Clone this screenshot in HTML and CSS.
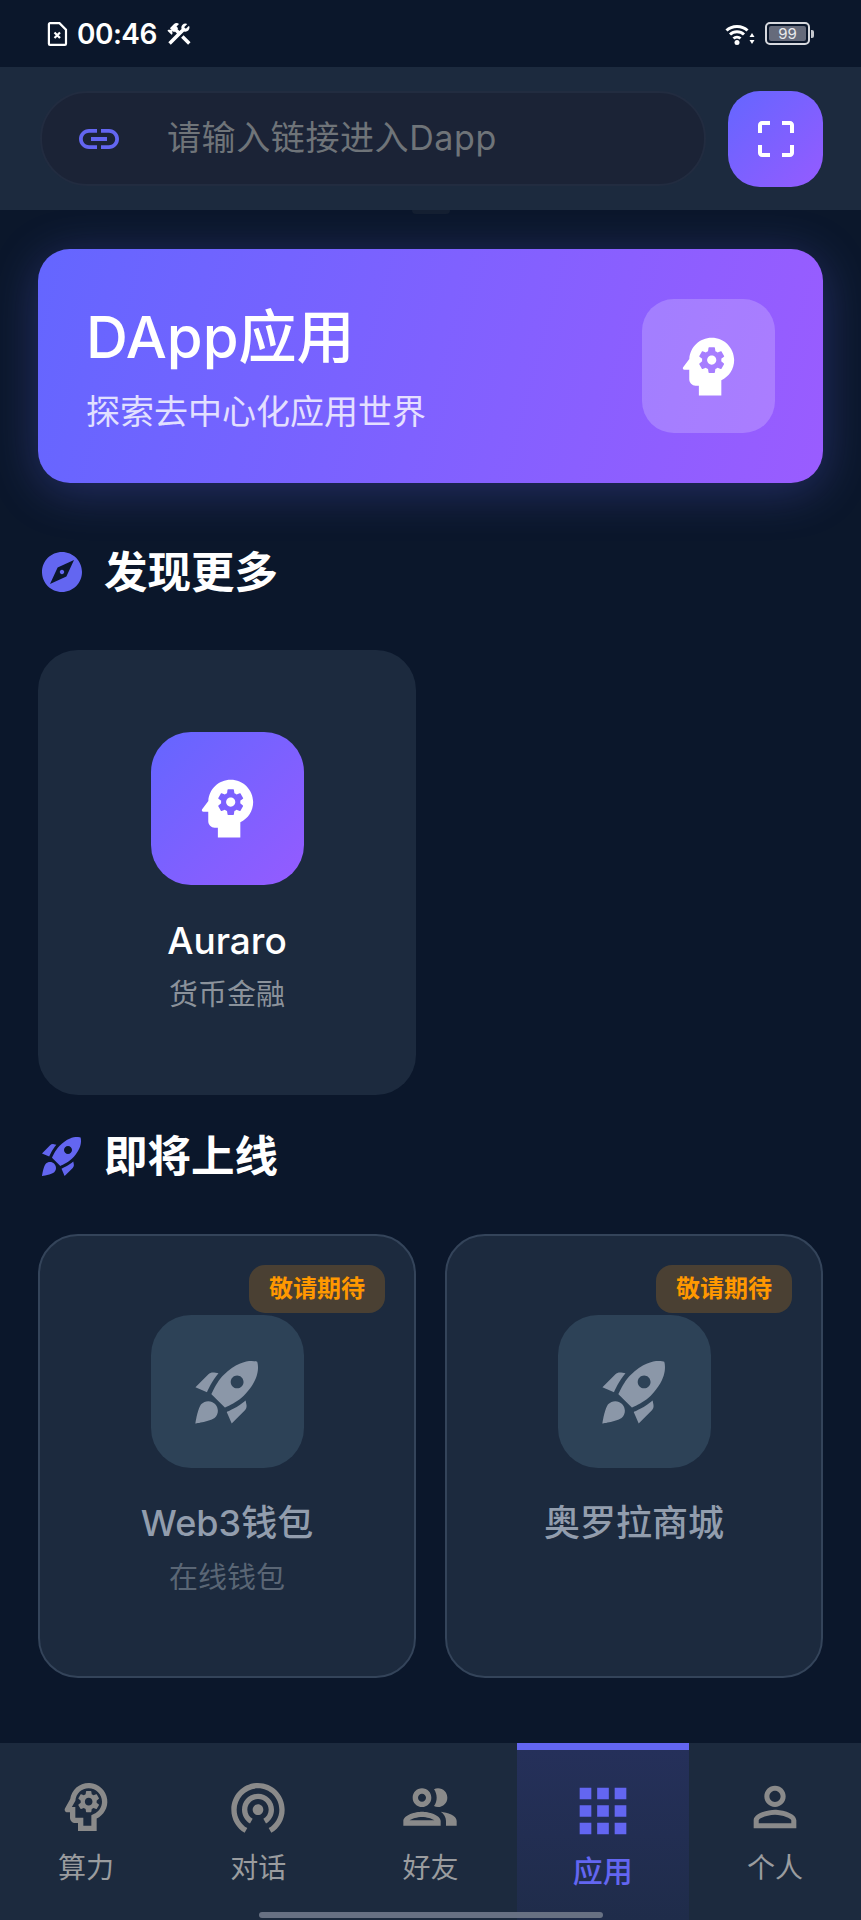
FILE: index.html
```html
<!DOCTYPE html>
<html lang="zh-CN">

<head>
   <meta charset="utf-8">
   <title>DApp应用</title>
   <link rel="stylesheet" href="styles.css">
</head>

<body>
   <svg class="defs" width="0" height="0" aria-hidden="true">
      <symbol id="i-head" viewBox="0 0 24 24">
         <path d="M13 8.57c-.79 0-1.43.64-1.43 1.43s.64 1.43 1.43 1.43 1.43-.64 1.43-1.43-.64-1.43-1.43-1.43z" />
         <path d="M13 3C9.25 3 6.2 5.94 6.02 9.64L4.1 12.2c-.25.33-.01.8.4.8H6v3c0 1.1.9 2 2 2h1v3h7v-4.68c2.36-1.12 4-3.53 4-6.32 0-3.87-3.13-7-7-7zm3 7c0 .13-.01.26-.03.38l.83.66c.07.06.09.16.04.25l-.8 1.39c-.05.09-.15.12-.24.09l-.99-.4c-.21.16-.43.29-.67.39L14 13.83c-.01.1-.1.17-.2.17h-1.6c-.1 0-.18-.07-.2-.17l-.15-1.06c-.25-.1-.47-.23-.68-.39l-.99.4c-.09.03-.2 0-.25-.09l-.8-1.39c-.05-.08-.03-.19.05-.25l.84-.66c-.01-.13-.02-.26-.02-.39s.02-.27.04-.39l-.85-.66c-.08-.06-.1-.16-.05-.26l.8-1.38c.05-.09.15-.12.24-.09l1 .4c.2-.15.43-.29.67-.39L12 6.17c.02-.1.1-.17.2-.17h1.6c.1 0 .18.07.2.17l.15 1.06c.24.1.46.23.67.39l1-.4c.09-.03.2 0 .24.09l.8 1.38c.05.09.03.2-.04.26l-.85.66c.03.12.04.25.04.39z" fill-rule="evenodd" />
      </symbol>
      <symbol id="i-head-line" viewBox="0 0 24 24">
         <path d="M15.82 7.22l-1 .4c-.21-.16-.43-.29-.67-.39L14 6.17c-.02-.1-.1-.17-.2-.17h-1.6c-.1 0-.18.07-.19.17l-.15 1.06c-.24.1-.47.23-.67.39l-1-.4c-.09-.03-.2 0-.24.09l-.8 1.38c-.05.09-.03.2.05.26l.84.66c-.02.13-.04.26-.04.39 0 .13.01.26.03.39l-.84.66c-.07.06-.09.17-.05.25l.8 1.38c.05.09.15.12.25.09l.99-.4c.21.16.43.29.68.39l.14 1.06c.02.1.1.17.2.17h1.6c.1 0 .18-.07.2-.17l.15-1.06c.24-.1.47-.23.67-.39l.99.4c.09.04.2 0 .24-.09l.8-1.38c.05-.09.03-.19-.05-.25l-.83-.66c.02-.13.03-.26.03-.39 0-.14-.01-.27-.03-.39l.84-.66c.07-.06.09-.17.05-.26l-.8-1.38c-.05-.09-.16-.12-.25-.09zM13 11.43c-.79 0-1.43-.64-1.43-1.43s.64-1.43 1.43-1.43 1.43.64 1.43 1.43-.64 1.43-1.43 1.43z" fill-rule="evenodd" />
         <path d="M19.94 9.06c-.43-3.27-3.23-5.86-6.53-6.05C13.27 3 13.14 3 13 3 9.47 3 6.57 5.61 6.08 9l-1.93 3.48c-.41.66.07 1.52.85 1.52h1v2c0 1.1.9 2 2 2h1v3h7v-4.68c2.62-1.25 4.35-4.08 3.94-7.26zm-5.05 5.57l-.89.42V19h-3v-3H8v-4H6.7l1.33-2.33C8.21 7.06 10.35 5 13 5c2.76 0 5 2.24 5 5 0 2.09-1.29 3.88-3.11 4.63z" fill-rule="evenodd" />
      </symbol>
      <symbol id="i-rocket" viewBox="0 0 24 24">
         <path d="M9.19 6.35c-2.04 2.29-3.44 5.58-3.57 5.89L2 10.69l4.05-4.05c.47-.47 1.15-.68 1.81-.55l1.33.26zM11.17 17s3.74-1.55 5.89-3.7c5.4-5.4 4.5-9.62 4.21-10.57-.95-.3-5.17-1.19-10.57 4.21C8.55 9.09 7 12.83 7 12.83L11.17 17zm6.48-2.19c-2.29 2.04-5.58 3.44-5.89 3.57L13.31 22l4.05-4.05c.47-.47.68-1.15.55-1.81l-.26-1.33zM9 18c0 .83-.34 1.58-.88 2.12C6.94 21.3 2 22 2 22s.7-4.94 1.88-6.12C4.42 15.34 5.17 15 6 15c1.66 0 3 1.34 3 3zm4-9c0-1.1.9-2 2-2s2 .9 2 2-.9 2-2 2-2-.9-2-2z" fill-rule="evenodd" />
      </symbol>
   </svg>

   <div class="status-bar">
      <div class="status-left">
         <svg class="ic-sim" viewBox="0 0 20 24">
            <path d="M2.5 1.2h9.5l6.5 6.5v14c0 .6-.5 1.1-1.1 1.1H2.5c-.6 0-1.1-.5-1.1-1.1V2.3c0-.6.5-1.1 1.1-1.1z" fill="none" stroke="#fff" stroke-width="2.2" />
            <path d="M7 10.5l5.5 5.5M12.5 10.5L7 16" stroke="#fff" stroke-width="2.2" />
         </svg>
         <span class="clock">00:46</span>
         <svg class="ic-tools" viewBox="0 0 24 24">
            <path d="M13.78 15.3l6 6 2.11-2.16-6-6zM17.5 10c1.93 0 3.5-1.57 3.5-3.5 0-.58-.16-1.12-.41-1.6l-2.7 2.7-1.49-1.49 2.7-2.7c-.48-.25-1.02-.41-1.6-.41C15.57 3 14 4.57 14 6.5c0 .41.08.8.21 1.16l-1.85 1.85-1.78-1.78.71-.71-1.41-1.41L12 3.49c-1.17-1.17-3.07-1.17-4.24 0L4.22 7.03l1.41 1.41H2.81l-.71.71 3.54 3.54.71-.71V9.15l1.41 1.41.71-.71 1.78 1.78-7.41 7.41 2.12 2.12L16.34 9.79c.36.13.75.21 1.16.21z" fill="#fff" />
         </svg>
      </div>
      <div class="status-right">
         <svg class="ic-wifi" viewBox="0 0 30 24">
            <path d="M1.5 8.5C7 3 17 3 22.5 8.5M5 12.5c4-3.8 10-3.8 14 0M8.5 16.5c2-1.8 5-1.8 7 0" fill="none" stroke="#fff" stroke-width="3" />
            <circle cx="12" cy="20.5" r="2.5" fill="#fff" />
            <path d="M27 11l2.5 4h-5zM27 22l-2.5-4h5z" fill="#fff" />
         </svg>
         <div class="battery"><span class="battery-level">99</span></div>
         <span class="battery-nub"></span>
      </div>
   </div>

   <div class="search-bar">
      <div class="search-input">
         <svg class="ic-link" viewBox="0 0 24 24">
            <path d="M3.9 12c0-1.71 1.39-3.1 3.1-3.1h4V7H7c-2.76 0-5 2.24-5 5s2.24 5 5 5h4v-1.9H7c-1.71 0-3.1-1.39-3.1-3.1zM8 13h8v-2H8v2zm9-6h-4v1.9h4c1.71 0 3.1 1.39 3.1 3.1s-1.39 3.1-3.1 3.1h-4V17h4c2.76 0 5-2.24 5-5s-2.24-5-5-5z" />
         </svg>
         <span class="placeholder">请输入链接进入Dapp</span>
      </div>
      <div class="scan-btn">
         <svg class="ic-scan" viewBox="0 0 24 24">
            <path d="M3 5v4h2V5h4V3H5c-1.1 0-2 .9-2 2zm2 10H3v4c0 1.1.9 2 2 2h4v-2H5v-4zm14 4h-4v2h4c1.1 0 2-.9 2-2v-4h-2v4zm0-16h-4v2h4v4h2V5c0-1.1-.9-2-2-2z" />
         </svg>
      </div>
      <span class="search-bump"></span>
   </div>

   <div class="main">
      <div class="hero">
         <div>
            <div class="hero-title">DApp应用</div>
            <div class="hero-sub">探索去中心化应用世界</div>
         </div>
         <div class="hero-icon">
            <svg class="ic-app"><use href="#i-head" /></svg>
         </div>
      </div>

      <div class="section-title first">
         <svg class="ic-section" viewBox="0 0 24 24">
            <path d="M12 10.9c-.61 0-1.1.49-1.1 1.1s.49 1.1 1.1 1.1c.61 0 1.1-.49 1.1-1.1s-.49-1.1-1.1-1.1zM12 2C6.48 2 2 6.48 2 12s4.48 10 10 10 10-4.48 10-10S17.52 2 12 2zm2.19 12.19L6 18l3.81-8.19L18 6l-3.81 8.19z" />
         </svg>
         <span>发现更多</span>
      </div>
      <div class="app-grid">
         <div class="app-card">
            <div class="app-icon live">
               <svg class="ic-app"><use href="#i-head" /></svg>
            </div>
            <div class="app-name">Auraro</div>
            <div class="app-desc">货币金融</div>
         </div>
      </div>

      <div class="section-title">
         <svg class="ic-section"><use href="#i-rocket" /></svg>
         <span>即将上线</span>
      </div>
      <div class="app-grid">
         <div class="app-card soon">
            <span class="badge">敬请期待</span>
            <div class="app-icon">
               <svg class="ic-app"><use href="#i-rocket" /></svg>
            </div>
            <div class="app-name">Web3钱包</div>
            <div class="app-desc">在线钱包</div>
         </div>
         <div class="app-card soon">
            <span class="badge">敬请期待</span>
            <div class="app-icon">
               <svg class="ic-app"><use href="#i-rocket" /></svg>
            </div>
            <div class="app-name">奥罗拉商城</div>
         </div>
      </div>
   </div>

   <div class="tabbar">
      <div class="tab">
         <svg class="ic-tab"><use href="#i-head-line" /></svg>
         <span>算力</span>
      </div>
      <div class="tab">
         <svg class="ic-tab" viewBox="0 0 24 24">
            <path d="M12 11c-1.1 0-2 .9-2 2 0 .55.23 1.05.59 1.41.36.36.86.59 1.41.59s1.05-.23 1.41-.59c.36-.36.59-.86.59-1.41 0-1.1-.9-2-2-2zm6 2c0-3.31-2.69-6-6-6s-6 2.69-6 6c0 2.22 1.21 4.15 3 5.19l1-1.74c-1.19-.7-2-1.97-2-3.45 0-2.21 1.79-4 4-4s4 1.79 4 4c0 1.48-.81 2.75-2 3.45l1 1.74c1.79-1.04 3-2.97 3-5.19zM12 3C6.48 3 2 7.48 2 13c0 3.7 2.01 6.92 4.99 8.65l1-1.73C5.61 18.53 4 15.96 4 13c0-4.42 3.58-8 8-8s8 3.58 8 8c0 2.96-1.61 5.53-4 6.92l1 1.73c2.99-1.73 5-4.95 5-8.65 0-5.52-4.48-10-10-10z" />
         </svg>
         <span>对话</span>
      </div>
      <div class="tab">
         <svg class="ic-tab" viewBox="0 0 24 24">
            <path d="M9 13.75c-2.34 0-7 1.17-7 3.5V19h14v-1.75c0-2.33-4.66-3.5-7-3.5zM4.34 17c.84-.58 2.87-1.25 4.66-1.25s3.82.67 4.66 1.25H4.34zM9 12c1.93 0 3.5-1.57 3.5-3.5S10.93 5 9 5 5.5 6.57 5.5 8.5 7.07 12 9 12zm0-5c.83 0 1.5.67 1.5 1.5S9.83 10 9 10s-1.5-.67-1.5-1.5S8.17 7 9 7zm7.04 6.81c1.16.84 1.96 1.96 1.96 3.44V19h4v-1.75c0-2.02-3.5-3.17-5.96-3.44zM15 12c1.93 0 3.5-1.57 3.5-3.5S16.93 5 15 5c-.54 0-1.04.13-1.5.35.63.89 1 1.98 1 3.15s-.37 2.26-1 3.15c.46.22.96.35 1.5.35z" />
         </svg>
         <span>好友</span>
      </div>
      <div class="tab active">
         <svg class="ic-tab" viewBox="0 0 24 24">
            <path d="M4 8h4V4H4v4zm6 12h4v-4h-4v4zm-6 0h4v-4H4v4zm0-6h4v-4H4v4zm6 0h4v-4h-4v4zm6-10v4h4V4h-4zm-6 4h4V4h-4v4zm6 6h4v-4h-4v4zm0 6h4v-4h-4v4z" />
         </svg>
         <span>应用</span>
      </div>
      <div class="tab">
         <svg class="ic-tab" viewBox="0 0 24 24">
            <path d="M12 5.9c1.16 0 2.1.94 2.1 2.1s-.94 2.1-2.1 2.1S9.9 9.16 9.9 8s.94-2.1 2.1-2.1m0 9c2.97 0 6.1 1.46 6.1 2.1v1.1H5.9V17c0-.64 3.13-2.1 6.1-2.1M12 4C9.79 4 8 5.79 8 8s1.79 4 4 4 4-1.79 4-4-1.79-4-4-4zm0 9c-2.67 0-8 1.34-8 4v3h16v-3c0-2.66-5.33-4-8-4z" />
         </svg>
         <span>个人</span>
      </div>
      <span class="home-bar"></span>
   </div>
</body>

</html>
```

FILE: styles.css
```css
* {
   box-sizing: border-box;
}

html,
body {
   margin: 0;
   height: 1920px;
}

body {
   display: flex;
   flex-direction: column;
   background: #0b172b;
   color: #fff;
   font-family: Inter, "Noto Sans CJK SC", sans-serif;
   overflow: hidden;
}

svg {
   display: block;
   flex: none;
}

.defs {
   position: absolute;
}

/* status bar */
.status-bar {
   height: 67px;
   flex: none;
   display: flex;
   justify-content: space-between;
   align-items: center;
   padding: 0 47px 0 47px;
}

.status-left,
.status-right {
   display: flex;
   align-items: center;
}

.ic-sim {
   width: 21px;
   height: 24px;
}

.clock {
   margin-left: 9px;
   font-size: 28px;
   font-weight: 600;
   letter-spacing: -.5px;
   line-height: 36px;
}

.ic-tools {
   width: 28px;
   height: 28px;
   margin-left: 8px;
}

.ic-wifi {
   width: 30px;
   height: 24px;
}

.battery {
   width: 45px;
   height: 23px;
   margin-left: 10px;
   padding: 2px;
   border: 2px solid #d7d9de;
   border-radius: 5px;
   display: flex;
}

.battery-level {
   flex: 1;
   background: #666b7b;
   border-radius: 2px;
   font-size: 15px;
   line-height: 15px;
   text-align: center;
   color: #e8e9ec;
}

.battery-nub {
   width: 3px;
   height: 8px;
   margin-left: 1px;
   background: #c5c7cd;
   border-radius: 0 2px 2px 0;
}

/* link input */
.search-bar {
   position: relative;
   height: 143px;
   flex: none;
   display: flex;
   align-items: center;
   gap: 22px;
   padding: 0 38px 0 40px;
   background: #1c2a3e;
}

.search-input {
   flex: 1;
   height: 95px;
   display: flex;
   align-items: center;
   padding-left: 33px;
   background: #1b2336;
   border: 2px solid #222c40;
   border-radius: 48px;
}

.ic-link {
   width: 48px;
   height: 48px;
   fill: #6366f1;
}

.placeholder {
   margin: 0 0 6px 44px;
   font-size: 34px;
   letter-spacing: .6px;
   color: #6f7479;
}

.scan-btn {
   width: 95px;
   height: 96px;
   display: flex;
   align-items: center;
   justify-content: center;
   border-radius: 32px;
   background: linear-gradient(135deg, #6466ff, #955bff);
}

.ic-scan {
   width: 48px;
   height: 48px;
   fill: #fff;
}

.search-bump {
   position: absolute;
   left: 412px;
   bottom: -4px;
   width: 38px;
   height: 4px;
   background: #141f31;
   border-radius: 0 0 19px 19px;
}

/* page content */
.main {
   flex: 1;
   padding: 39px 38px 0;
}

.hero {
   height: 234px;
   display: flex;
   align-items: center;
   justify-content: space-between;
   padding: 3px 48px 0 48px;
   border-radius: 32px;
   background: linear-gradient(105deg, #6466ff, #9a5cff);
   box-shadow: 0 8px 48px rgba(99, 102, 241, .3);
}

.hero-title {
   font-size: 58px;
   font-weight: 500;
   line-height: 72px;
}

.hero-sub {
   margin-top: 17px;
   font-size: 34px;
   line-height: 44px;
   opacity: .8;
}

.hero-icon {
   width: 133px;
   height: 134px;
   margin-top: -3px;
   display: flex;
   align-items: center;
   justify-content: center;
   border-radius: 32px;
   background: rgba(255, 255, 255, .2);
}

.ic-app {
   width: 77px;
   height: 77px;
   fill: #fff;
}

.section-title {
   height: 48px;
   display: flex;
   align-items: center;
   gap: 18px;
   margin-top: 37px;
   font-size: 43.5px;
   font-weight: 700;
}

.section-title span {
   margin-bottom: 6px;
}

.section-title.first {
   margin-top: 65px;
}

.ic-section {
   width: 48px;
   height: 48px;
   fill: #6366f1;
}

.app-grid {
   display: grid;
   grid-template-columns: 378px 378px;
   gap: 29px;
   margin-top: 54px;
}

.app-card {
   position: relative;
   height: 445px;
   display: flex;
   flex-direction: column;
   align-items: center;
   padding-top: 82px;
   border-radius: 40px;
   background: #1c2a3e;
}

.app-card.soon {
   height: 444px;
   padding-top: 79px;
   border: 2px solid #34445a;
}

.app-icon {
   width: 153px;
   height: 153px;
   display: flex;
   align-items: center;
   justify-content: center;
   border-radius: 40px;
   background: #2d4257;
}

.app-icon.live {
   background: linear-gradient(135deg, #6466ff, #955bff);
}

.app-name {
   margin-top: 32px;
   font-size: 37px;
   font-weight: 500;
   line-height: 48px;
}

.app-desc {
   margin-top: 10px;
   font-size: 29px;
   line-height: 40px;
   color: #8b929b;
}

.soon .ic-app {
   fill: #8b97a8;
}

.soon .app-name {
   margin-top: 31px;
   font-size: 36px;
   font-weight: 500;
   color: #929dad;
}

.soon .app-desc {
   margin-top: 11px;
   color: #5a6675;
}

.badge {
   position: absolute;
   top: 29px;
   right: 29px;
   width: 136px;
   height: 48px;
   border-radius: 16px;
   background: #4a4033;
   color: #ff9800;
   font-size: 24px;
   font-weight: 700;
   line-height: 48px;
   text-align: center;
}

/* bottom tabs */
.tabbar {
   position: relative;
   height: 177px;
   flex: none;
   display: grid;
   grid-template-columns: repeat(5, 1fr);
   background: #1c2a3e;
}

.tab {
   display: flex;
   flex-direction: column;
   align-items: center;
   padding-top: 32px;
   font-size: 28px;
   line-height: 40px;
   color: #9a9c9f;
}

.tab span {
   margin-top: 9px;
}

.ic-tab {
   width: 64px;
   height: 64px;
   fill: #8a8a8a;
}

.tab.active {
   padding-top: 26px;
   border-top: 7px solid #6366f1;
   background: linear-gradient(180deg, #25305a, #1f2c4a);
   color: #6366f1;
   font-size: 30px;
}

.tab.active .ic-tab {
   width: 70px;
   height: 70px;
   fill: #6366f1;
}

.tab.active span {
   margin-top: 5px;
   font-weight: 500;
}

.home-bar {
   position: absolute;
   left: 259px;
   bottom: 2px;
   width: 344px;
   height: 6px;
   border-radius: 3px;
   background: #687183;
}
```
